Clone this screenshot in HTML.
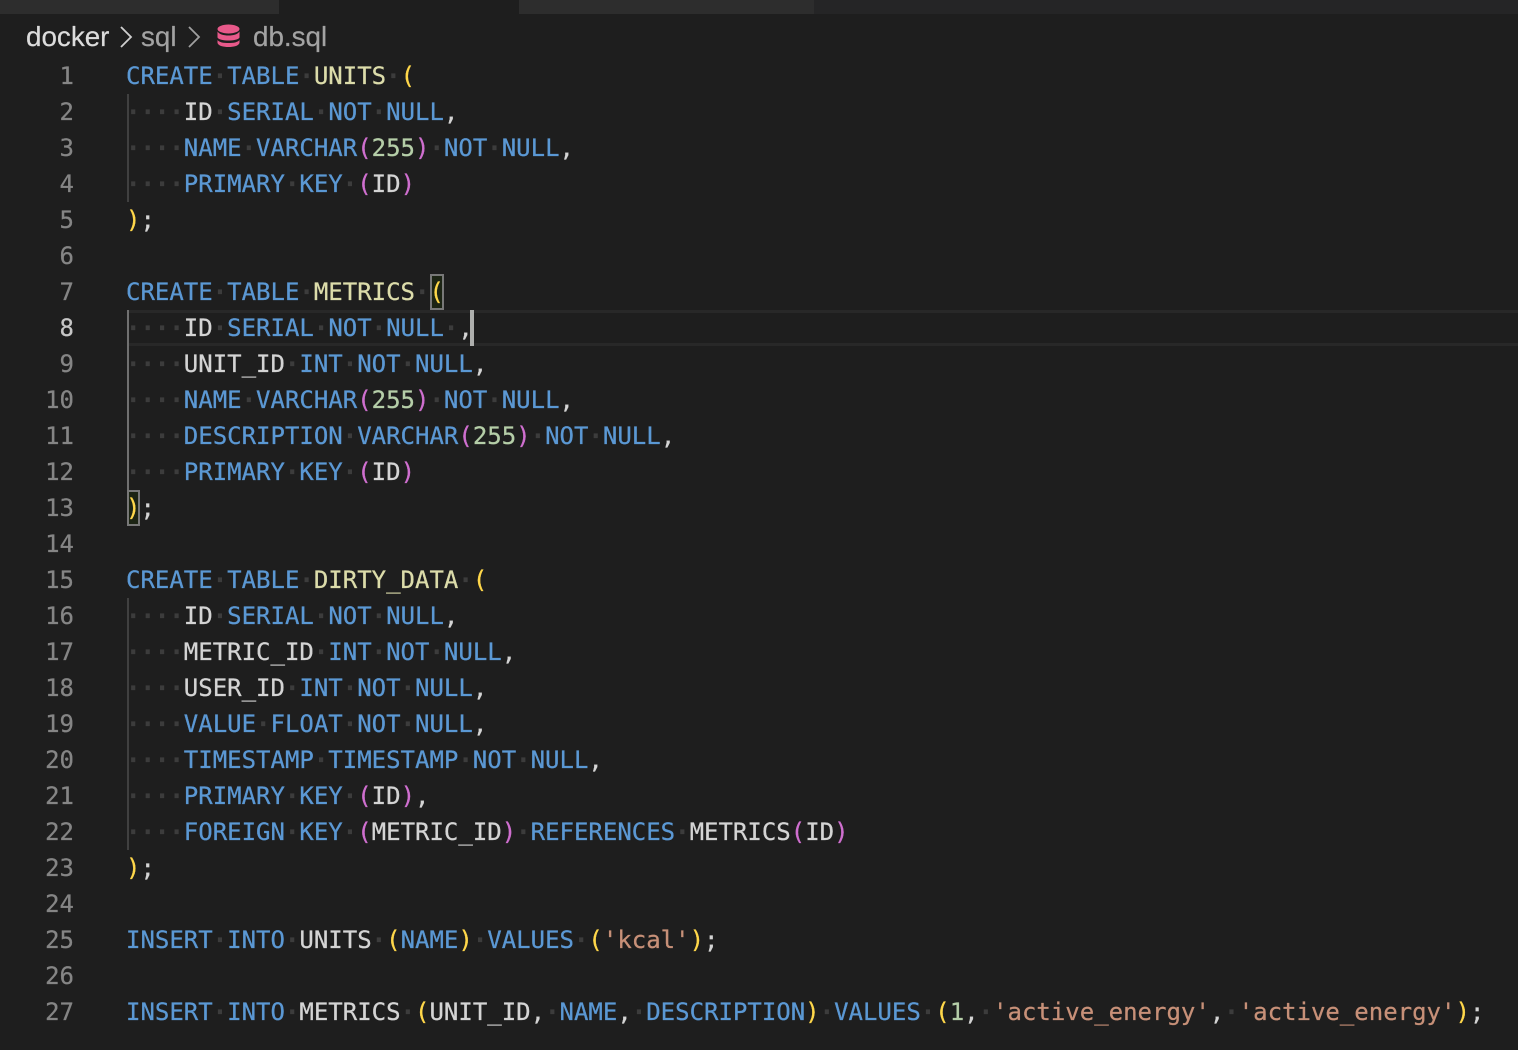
<!DOCTYPE html>
<html><head><meta charset="utf-8"><style>
html,body{margin:0;padding:0;background:#1e1e1e}
#a{position:relative;width:1518px;height:1050px;overflow:hidden;background:#1e1e1e}
.b{position:absolute}
#c{position:absolute;left:126px;top:58px;font:24px/36px "DejaVu Sans Mono",monospace;color:#d4d4d4;white-space:normal;-webkit-text-stroke:.25px}
#c div{height:36px;white-space:pre}
#n{position:absolute;left:0;top:58px;width:74px;text-align:right;font:24px/36px "DejaVu Sans Mono",monospace;color:#858585;-webkit-text-stroke:.25px}
#n div{height:36px}
i{font-style:normal;color:#3c3c3c;-webkit-text-stroke:1.2px #3c3c3c}
.k{color:#5b98d4}.t{color:#dcdcaa}.y{color:#ffd74a}.m{color:#cf6fcf}.g{color:#b5cea8}.s{color:#c79078}
.bc{position:absolute;top:21px;font:27.8px/32px "Liberation Sans",sans-serif;white-space:pre;-webkit-text-stroke:.2px}
</style></head><body><div id="a">
<div class="b" style="left:0;top:0;width:279px;height:14px;background:#2d2d2d"></div>
<div class="b" style="left:279px;top:0;width:240px;height:14px;background:#1e1e1e"></div>
<div class="b" style="left:519px;top:0;width:295px;height:14px;background:#2d2d2d"></div>
<div class="b" style="left:814px;top:0;width:704px;height:14px;background:#252526"></div>
<div class="bc" style="left:26px;color:#dcdcdc">docker</div>
<div class="bc" style="left:141px;color:#a3a3a3">sql</div>
<div class="bc" style="left:253px;color:#a3a3a3">db.sql</div>
<svg class="b" style="left:118px;top:24px" width="90" height="26" fill="none" stroke-width="1.8"><path d="M3 3l10 10-10 10" stroke="#d0d0d0"/><path d="M71 3l10 10-10 10" stroke="#a0a0a0"/></svg>
<svg class="b" style="left:216px;top:23px" width="26" height="26"><g fill="#e8598a"><ellipse cx="12.5" cy="6" rx="11" ry="4.5"/><path d="M1.500 8.500c2 3 6 4 11 4s9-1 11-4v6c-1 2-6 3-11 3s-10-1-11-3z"/><path d="M1.500 17c2 2.500 6 3 11 3s9-.5 11-3v3c-1 3-6 4-11 4s-10-1-11-4z"/></g></svg>
<div class="b" style="left:127px;top:310px;width:1391px;height:30px;border:solid #282828;border-width:3px 0"></div>
<div class="b" style="left:127px;top:94px;width:2px;height:108px;background:#404040"></div>
<div class="b" style="left:127px;top:310px;width:2px;height:180px;background:#707070"></div>
<div class="b" style="left:127px;top:598px;width:2px;height:252px;background:#404040"></div>
<div class="b" style="left:430px;top:274px;width:10px;height:32px;border:2px solid #787878;background:#1c2414"></div>
<div class="b" style="left:127px;top:490px;width:9px;height:32px;border:2px solid #787878;background:#1c2414"></div>
<div class="b" style="left:470px;top:310px;width:3.500px;height:36px;background:#aeafad;z-index:3"></div>
<div id="n"><div>1</div><div>2</div><div>3</div><div>4</div><div>5</div><div>6</div><div>7</div><div style="color:#c6c6c6">8</div><div>9</div><div>10</div><div>11</div><div>12</div><div>13</div><div>14</div><div>15</div><div>16</div><div>17</div><div>18</div><div>19</div><div>20</div><div>21</div><div>22</div><div>23</div><div>24</div><div>25</div><div>26</div><div>27</div></div>
<div id="c">
<div><span class="k">CREATE</span><i>·</i><span class="k">TABLE</span><i>·</i><span class="t">UNITS</span><i>·</i><span class="y">(</span></div>
<div><i>····</i>ID<i>·</i><span class="k">SERIAL</span><i>·</i><span class="k">NOT</span><i>·</i><span class="k">NULL</span>,</div>
<div><i>····</i><span class="k">NAME</span><i>·</i><span class="k">VARCHAR</span><span class="m">(</span><span class="g">255</span><span class="m">)</span><i>·</i><span class="k">NOT</span><i>·</i><span class="k">NULL</span>,</div>
<div><i>····</i><span class="k">PRIMARY</span><i>·</i><span class="k">KEY</span><i>·</i><span class="m">(</span>ID<span class="m">)</span></div>
<div><span class="y">)</span>;</div>
<div> </div>
<div><span class="k">CREATE</span><i>·</i><span class="k">TABLE</span><i>·</i><span class="t">METRICS</span><i>·</i><span class="y">(</span></div>
<div><i>····</i>ID<i>·</i><span class="k">SERIAL</span><i>·</i><span class="k">NOT</span><i>·</i><span class="k">NULL</span><i>·</i>,</div>
<div><i>····</i>UNIT_ID<i>·</i><span class="k">INT</span><i>·</i><span class="k">NOT</span><i>·</i><span class="k">NULL</span>,</div>
<div><i>····</i><span class="k">NAME</span><i>·</i><span class="k">VARCHAR</span><span class="m">(</span><span class="g">255</span><span class="m">)</span><i>·</i><span class="k">NOT</span><i>·</i><span class="k">NULL</span>,</div>
<div><i>····</i><span class="k">DESCRIPTION</span><i>·</i><span class="k">VARCHAR</span><span class="m">(</span><span class="g">255</span><span class="m">)</span><i>·</i><span class="k">NOT</span><i>·</i><span class="k">NULL</span>,</div>
<div><i>····</i><span class="k">PRIMARY</span><i>·</i><span class="k">KEY</span><i>·</i><span class="m">(</span>ID<span class="m">)</span></div>
<div><span class="y">)</span>;</div>
<div> </div>
<div><span class="k">CREATE</span><i>·</i><span class="k">TABLE</span><i>·</i><span class="t">DIRTY_DATA</span><i>·</i><span class="y">(</span></div>
<div><i>····</i>ID<i>·</i><span class="k">SERIAL</span><i>·</i><span class="k">NOT</span><i>·</i><span class="k">NULL</span>,</div>
<div><i>····</i>METRIC_ID<i>·</i><span class="k">INT</span><i>·</i><span class="k">NOT</span><i>·</i><span class="k">NULL</span>,</div>
<div><i>····</i>USER_ID<i>·</i><span class="k">INT</span><i>·</i><span class="k">NOT</span><i>·</i><span class="k">NULL</span>,</div>
<div><i>····</i><span class="k">VALUE</span><i>·</i><span class="k">FLOAT</span><i>·</i><span class="k">NOT</span><i>·</i><span class="k">NULL</span>,</div>
<div><i>····</i><span class="k">TIMESTAMP</span><i>·</i><span class="k">TIMESTAMP</span><i>·</i><span class="k">NOT</span><i>·</i><span class="k">NULL</span>,</div>
<div><i>····</i><span class="k">PRIMARY</span><i>·</i><span class="k">KEY</span><i>·</i><span class="m">(</span>ID<span class="m">)</span>,</div>
<div><i>····</i><span class="k">FOREIGN</span><i>·</i><span class="k">KEY</span><i>·</i><span class="m">(</span>METRIC_ID<span class="m">)</span><i>·</i><span class="k">REFERENCES</span><i>·</i>METRICS<span class="m">(</span>ID<span class="m">)</span></div>
<div><span class="y">)</span>;</div>
<div> </div>
<div><span class="k">INSERT</span><i>·</i><span class="k">INTO</span><i>·</i>UNITS<i>·</i><span class="y">(</span><span class="k">NAME</span><span class="y">)</span><i>·</i><span class="k">VALUES</span><i>·</i><span class="y">(</span><span class="s">'kcal'</span><span class="y">)</span>;</div>
<div> </div>
<div><span class="k">INSERT</span><i>·</i><span class="k">INTO</span><i>·</i>METRICS<i>·</i><span class="y">(</span>UNIT_ID,<i>·</i><span class="k">NAME</span>,<i>·</i><span class="k">DESCRIPTION</span><span class="y">)</span><i>·</i><span class="k">VALUES</span><i>·</i><span class="y">(</span><span class="g">1</span>,<i>·</i><span class="s">'active_energy'</span>,<i>·</i><span class="s">'active_energy'</span><span class="y">)</span>;</div>
</div>
</div></body></html>
